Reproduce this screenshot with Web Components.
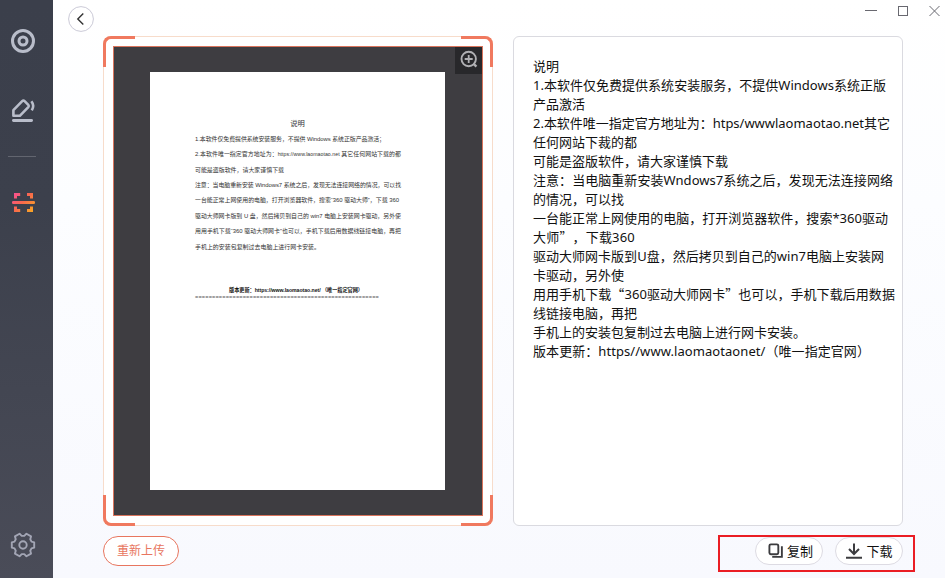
<!DOCTYPE html>
<html lang="zh-CN">
<head>
<meta charset="utf-8">
<title>OCR</title>
<style>
html,body{margin:0;height:100%;overflow:hidden}
body{font-family:"Noto Sans","Noto Sans CJK SC",sans-serif;color:#111;text-spacing-trim:space-all}
</style>
</head>
<body>
<ocr-app></ocr-app>
<script>
const define = (name, html, Base = HTMLElement) => {
  const t = document.createElement('template');
  t.innerHTML = html;
  customElements.define(name, class extends Base {
    constructor() {
      super();
      this.attachShadow({ mode: 'open' }).appendChild(t.content.cloneNode(true));
    }
  });
};

/* One line of text, spaced out to the width given in its "w" attribute. */
class TextLine extends HTMLElement {
  constructor() {
    super();
    this.attachShadow({ mode: 'open' }).innerHTML =
      '<style>:host{display:block;white-space:nowrap}span{display:inline-block;vertical-align:top}</style><span><slot></slot></span>';
  }
  connectedCallback() {
    const w = parseFloat(this.getAttribute('w'));
    if (!w) return;
    const s = this.shadowRoot.querySelector('span');
    const n = this.textContent.length;
    s.style.letterSpacing = (w - s.getBoundingClientRect().width) / n + 'px';
  }
}

define('side-bar', `
<style>
:host{display:flex;flex-direction:column;align-items:center;box-sizing:border-box;width:53px;height:100%;padding:28px 7px 19px 0;background:linear-gradient(#3b3f4b 0%,#3c404c 35%,#4a4c58 100%)}
svg{display:block;flex:none}
.pen{margin-top:43px}
hr{width:28px;height:1px;border:0;margin:33px 0 33px;background:#62656f;transform:translateX(-1px)}
.gear{margin-top:auto}
</style>
<svg width="26" height="26" viewBox="0 0 26 26" fill="none" stroke="#b9bdca"><circle cx="13" cy="13" r="10.5" stroke-width="3"/><circle cx="13" cy="13" r="4" stroke-width="3"/></svg>
<svg class="pen" width="26" height="26" viewBox="0 0 26 26" fill="none" stroke="#b9bdca" stroke-width="2.6" stroke-linejoin="round"><path d="M3.4 18.8V13.2L12.2 4.2Q13.4 3 14.6 4.2L18.3 7.9Q19.3 9 18.3 10.1L9.8 18.8Z"/><path d="M21.4 4.2Q24.8 8.4 21.8 13.4" stroke-linecap="butt"/><path d="M3.4 23.5H21.6" stroke-linecap="round" stroke-width="2.8"/></svg>
<hr>
<svg width="26" height="24" viewBox="0 0 26 24" fill="none" stroke-width="3"><defs><linearGradient id="a" gradientUnits="userSpaceOnUse" x1="3" y1="3" x2="22" y2="21"><stop offset="0" stop-color="#f74f97"/><stop offset=".5" stop-color="#f8684d"/><stop offset="1" stop-color="#f9a227"/></linearGradient></defs><g stroke="url(#a)"><path d="M5.5 8.5V4.5H10.2M17 4.5H21.5V8.5M5.5 16.5V20.5H10.2M17 20.5H21.5V16.5"/></g><rect x="2" y="11" width="23" height="3" rx="1.2" fill="url(#a)"/></svg>
<svg class="gear" width="28" height="28" viewBox="0 0 28 28" fill="none" stroke="#a2a5b4" stroke-width="1.9" stroke-linejoin="round"><circle cx="14" cy="14" r="3.7"/><path d="M25.2 11.35V16.65L22.5 17.4L21.25 19.7L22.05 22.6L17.45 25.3L15.3 23.1H12.7L10.55 25.3L5.95 22.6L6.75 19.7L5.5 17.4L2.8 16.65V11.35L5.5 10.6L6.75 8.3L5.95 5.4L10.55 2.7L12.7 4.9H15.3L17.45 2.7L22.05 5.4L21.25 8.3L22.5 10.6Z"/></svg>`);

define('top-bar', `
<style>
:host{display:flex;justify-content:space-between;align-items:flex-start;height:36px;padding:0 5px 0 15px;box-sizing:border-box}
.back{margin-top:6px}
.win{display:flex;gap:20px;padding-top:5px}
svg{display:block}
</style>
<svg class="back" width="26" height="26" viewBox="0 0 26 26" fill="none"><circle cx="13" cy="13" r="12.4" fill="#fff" stroke="#cbcad7"/><path d="M15.3 7.6L9.8 13L15.3 18.5" stroke="#333" stroke-width="1.4"/></svg>
<div class="win">
<svg width="12" height="12" viewBox="0 0 12 12" stroke="#686870"><path d="M0 5.5H12"/></svg>
<svg width="12" height="12" viewBox="0 0 12 12" stroke="#686870" fill="none"><rect x="1.5" y="1.5" width="9" height="9"/></svg>
<svg width="11" height="12" viewBox="0 0 11 12" stroke="#686870"><path d="M.5 1L10.5 11M10.5 1L.5 11"/></svg>
</div>`);

define('scan-preview', `
<style>
:host{display:block;position:relative;box-sizing:border-box;width:390px;height:490px;padding:9px;border:1px solid #f7dccb;border-radius:7px;background:#fff}
.dark{display:flex;box-sizing:border-box;width:370px;height:470px;padding:25px 0 0 36px;border:1px solid #d9745c;background:#3e3d41;position:relative}
.page{width:295px;height:418px;background:#fff;overflow:hidden}
.zoom{position:absolute;right:0;top:0;width:27px;height:27px;background:#28282b}
.c{position:absolute;width:32px;height:31px;box-sizing:border-box;border:0 solid #f0795f}
.tl{left:-1px;top:-1px;border-width:3px 0 0 3px;border-top-left-radius:8px}
.tr{right:-1px;top:-1px;border-width:3px 3px 0 0;border-top-right-radius:8px}
.bl{left:-1px;bottom:-1px;border-width:0 0 3px 3px;border-bottom-left-radius:8px}
.br{right:-1px;bottom:-1px;border-width:0 3px 3px 0;border-bottom-right-radius:8px}
</style>
<div class="dark"><div class="page"><slot></slot></div>
<svg class="zoom" viewBox="0 0 27 27" fill="none" stroke="#b0b0b3" stroke-width="1.9"><circle cx="13.7" cy="12" r="7.2"/><path d="M9.7 12H17.7M13.7 8V16" stroke-width="1.8"/><path d="M18.4 16.7L21.4 19.7" stroke-width="2.4"/></svg></div>
<i class="c tl"></i><i class="c tr"></i><i class="c bl"></i><i class="c br"></i>`);

define('paper-doc', `
<style>
:host{display:block;padding:46px 0 0 45px;font:5.93px/15.43px "Liberation Sans","Noto Sans CJK SC",sans-serif;color:#333}
.t{width:205px;text-align:center;font-size:7.3px;line-height:12px;margin-bottom:1.7px}
.f{margin:29px 0 0 34px;font-size:5.2px;font-weight:bold;line-height:12px;color:#111}
.r{line-height:5px;font-size:5.6px;color:#555;margin-top:-1px}
small{font-size:5.2px}
</style>
<div class="t">说明</div>
<text-line w="190">1.本软件仅免费提供系统安装服务，不提供 Windows 系统正版产品激活；</text-line>
<text-line w="206">2.本软件唯一指定官方地址为：<small>https://www.laomaotao.net</small> 其它任何网站下载的都</text-line>
<text-line w="89">可能是盗版软件，请大家谨慎下载</text-line>
<text-line w="206">注意：当电脑重新安装 Windows7 系统之后，发现无法连接网络的情况，可以找</text-line>
<text-line w="204">一台能正常上网使用的电脑，打开浏览器软件，搜索“360 驱动大师”，下载 360</text-line>
<text-line w="206">驱动大师网卡版到 U 盘，然后拷贝到自己的 win7 电脑上安装网卡驱动，另外使</text-line>
<text-line w="206">用用手机下载“360 驱动大师网卡”也可以，手机下载后用数据线链接电脑，再把</text-line>
<text-line w="125">手机上的安装包复制过去电脑上进行网卡安装。</text-line>
<text-line class="f" w="134">版本更新：https://www.laomaotao.net/ （唯一指定官网）</text-line>
<text-line class="r" w="184">======================================================</text-line>`);

define('result-panel', `
<style>
:host{display:block;box-sizing:border-box;width:390px;height:490px;padding:20px 0 0 19px;border:1px solid #dadae0;border-radius:6px;background:#fff;font-size:13px;line-height:19px;color:#111}
</style><slot></slot>`);

define('result-text', `
<style>:host{display:block}text-line{height:19px}q{quotes:none;font-family:"Noto Sans CJK SC",sans-serif;line-height:1px}q::before,q::after{content:none}</style>
<text-line>说明</text-line>
<text-line w="353">1.本软件仅免费提供系统安装服务，不提供Windows系统正版</text-line>
<text-line>产品激活</text-line>
<text-line w="357">2.本软件唯一指定官方地址为：htps/wwwlaomaotao.net其它</text-line>
<text-line>任何网站下裁的都</text-line>
<text-line>可能是盗版软件，请大家谨慎下载</text-line>
<text-line w="360">注意：当电脑重新安装Wndows7系统之后，发现无法连接网络</text-line>
<text-line>的情况，可以找</text-line>
<text-line w="355">一台能正常上网使用的电脑，打开浏览器软件，搜索*360驱动</text-line>
<text-line w="102">大师<q>”</q>，下载360</text-line>
<text-line w="351">驱动大师网卡版到U盘，然后拷贝到自己的win7电脑上安装网</text-line>
<text-line>卡驱动，另外使</text-line>
<text-line w="362">用用手机下载<q>“</q>360驱动大师网卡<q>”</q>也可以，手机下载后用数据</text-line>
<text-line>线链接电脑，再把</text-line>
<text-line>手机上的安装包复制过去电脑上进行网卡安装。</text-line>
<text-line w="337">版本更新：https//www.laomaotaonet/（唯一指定官网）</text-line>`);

define('pill-button', `
<style>
:host{display:flex;align-items:center;justify-content:center;box-sizing:border-box;width:68px;height:28px;border:1px solid #dddbe3;border-radius:14px;background:#fff;font-size:13px;line-height:18px;color:#111;white-space:nowrap;gap:3px}
:host([accent]){width:76px;height:30px;border-color:#e8765f;border-radius:15px;font-size:12px;color:#e8765f}
</style><slot name="icon"></slot><slot></slot>`);

define('ocr-app', `
<style>
:host{display:flex;width:945px;height:578px;position:relative;overflow:hidden;background:linear-gradient(#fff 0%,#fcfdff 35%,#f8f9fe 100%)}
main{flex:1;display:flex;flex-direction:column}
.cols{display:flex;gap:20px;padding:0 0 0 50px}
.foot{display:flex;align-items:flex-start;padding:10px 42px 0 50px}
.foot .sp{flex:1}
.foot .cp{margin:1px 12px 0 0;gap:4px;padding-left:3px}.foot .dl{margin-top:1px;gap:4px;padding-left:1px}
.mark{position:absolute;left:718px;top:535px;width:197px;height:37px;box-sizing:border-box;border:2px solid #ea1d24}
svg{display:block}
.cp svg{margin-top:-2px}.dl svg{margin-top:-1px}
</style>
<side-bar></side-bar>
<main>
<top-bar></top-bar>
<div class="cols">
<scan-preview><paper-doc></paper-doc></scan-preview>
<result-panel><result-text></result-text></result-panel>
</div>
<div class="foot">
<pill-button accent>重新上传</pill-button><span class="sp"></span>
<pill-button class="cp"><svg slot="icon" width="15" height="15" viewBox="0 0 16 16" fill="none" stroke="#3c3c3f" stroke-width="2"><rect x="1.5" y="1.5" width="9.5" height="10.5" rx="1.5"/><path d="M14.8 3.5V14.8H4.5"/></svg>复制</pill-button>
<pill-button class="dl"><svg slot="icon" width="16" height="16" viewBox="0 0 16 16" fill="none" stroke="#3c3c3f" stroke-width="2"><path d="M8 0.5V11M3 6L8 11L13 6M0 14.7H16"/></svg>下载</pill-button>
</div>
</main>
<div class="mark"></div>`);

customElements.define('text-line', TextLine);
</script>
</body>
</html>
